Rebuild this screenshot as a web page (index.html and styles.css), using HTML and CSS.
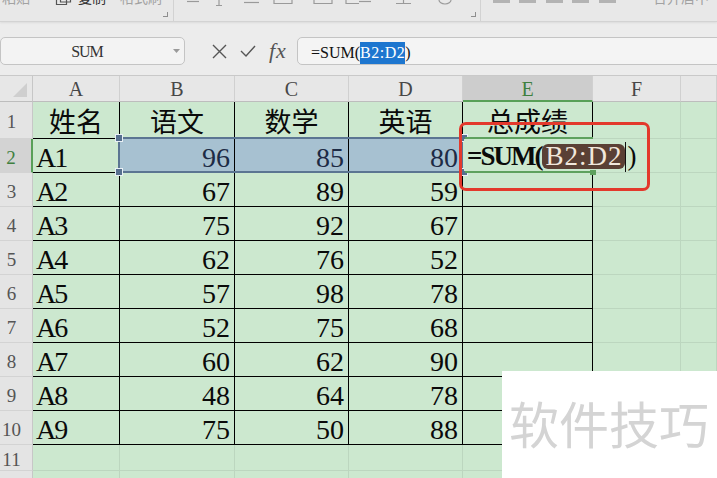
FILE: index.html
```html
<!DOCTYPE html>
<html lang="zh">
<head>
<meta charset="utf-8">
<title>WPS 表格 - SUM</title>
<link rel="stylesheet" href="styles.css">
</head>
<body>
<div class="app">
  <div class="toolbar">
    <span class="tb-t tb-light tb-paste">粘贴</span>
    <svg class="tb-copy" width="17" height="6" viewBox="0 0 17 6"><path d="M1.5 0v4.5h10v-4.5M5.5 0v2h10v-2" fill="none" stroke="#555" stroke-width="1.2"/></svg>
    <span class="tb-t tb-dark tb-copytxt">复制</span>
    <span class="tb-t tb-light tb-brush">格式刷</span>
    <span class="tb-corner tb-corner1"></span>
    <span class="tb-sep tb-sep1"></span>
    <svg class="tb-strip" width="295" height="8" viewBox="0 0 295 8">
      <g fill="none" stroke="#9a9a9a" stroke-width="1.2">
        <path d="M13 1.5h12"/>
        <path d="M45 0v5M42 5.5h6"/>
        <path d="M70 2.5h15"/>
        <path d="M100 0v3.5h18v-3.5"/>
        <path d="M140 0v3.5h18v-3.5"/>
        <path d="M172 0v3.5h13"/>
        <path d="M185 1.5h12"/>
        <path d="M222 3.5h15M229.5 0v3.5"/>
        <path d="M265 0a6 4 0 0 0 12 0"/>
      </g>
    </svg>
    <span class="tb-corner tb-corner2"></span>
    <span class="tb-sep tb-sep2"></span>
    <svg class="tb-blocks" width="125" height="4" viewBox="0 0 125 4">
      <g fill="#b3b3b3">
        <rect x="0" y="0" width="17" height="3"/>
        <rect x="26" y="0" width="17" height="3"/>
        <rect x="53" y="0" width="17" height="3"/>
        <rect x="79" y="0" width="17" height="3"/>
        <rect x="106" y="0" width="17" height="3"/>
      </g>
    </svg>
    <span class="tb-t tb-light tb-merge">合并居中</span>
  </div>

  <div class="fbar">
    <div class="namebox">
      <span class="nb-text">SUM</span>
      <svg class="nb-arrow" width="7" height="4" viewBox="0 0 7 4"><path d="M0 0h7L3.5 4z" fill="#9a9a9a"/></svg>
    </div>
    <div class="fx-icons">
      <svg class="ic-x" width="15" height="15" viewBox="0 0 15 15"><path d="M1 1L14 14M14 1L1 14" stroke="#555" stroke-width="1.4" fill="none"/></svg>
      <svg class="ic-ok" width="16" height="12" viewBox="0 0 16 12"><path d="M1 6l5 5L15 1" stroke="#555" stroke-width="1.4" fill="none"/></svg>
      <span class="ic-fx">fx</span>
    </div>
    <div class="finput">=SUM(<span class="hl">B2:D2</span>)</div>
  </div>

  <div class="sheet">
    <div class="grid">
      <div class="rh corner"><svg width="14" height="14" viewBox="0 0 14 14"><path d="M14 0V14H0z" fill="#cfcfcf"/></svg></div>
      <div class="ch">A</div><div class="ch">B</div><div class="ch">C</div><div class="ch">D</div><div class="ch on">E</div><div class="ch">F</div><div class="ch"></div>

      <div class="rh">1</div><div class="c t h">姓名</div><div class="c t h">语文</div><div class="c t h">数学</div><div class="c t h">英语</div><div class="c t h">总成绩</div><div class="c"></div><div class="c"></div>

      <div class="rh on">2</div><div class="c t l">A1</div><div class="c t r s">96</div><div class="c t r s">85</div><div class="c t r s">80</div><div class="c t"></div><div class="c"></div><div class="c"></div>

      <div class="rh">3</div><div class="c t l">A2</div><div class="c t r">67</div><div class="c t r">89</div><div class="c t r">59</div><div class="c t"></div><div class="c"></div><div class="c"></div>

      <div class="rh">4</div><div class="c t l">A3</div><div class="c t r">75</div><div class="c t r">92</div><div class="c t r">67</div><div class="c t"></div><div class="c"></div><div class="c"></div>

      <div class="rh">5</div><div class="c t l">A4</div><div class="c t r">62</div><div class="c t r">76</div><div class="c t r">52</div><div class="c t"></div><div class="c"></div><div class="c"></div>

      <div class="rh">6</div><div class="c t l">A5</div><div class="c t r">57</div><div class="c t r">98</div><div class="c t r">78</div><div class="c t"></div><div class="c"></div><div class="c"></div>

      <div class="rh">7</div><div class="c t l">A6</div><div class="c t r">52</div><div class="c t r">75</div><div class="c t r">68</div><div class="c t"></div><div class="c"></div><div class="c"></div>

      <div class="rh">8</div><div class="c t l">A7</div><div class="c t r">60</div><div class="c t r">62</div><div class="c t r">90</div><div class="c t"></div><div class="c"></div><div class="c"></div>

      <div class="rh">9</div><div class="c t l">A8</div><div class="c t r">48</div><div class="c t r">64</div><div class="c t r">78</div><div class="c t"></div><div class="c"></div><div class="c"></div>

      <div class="rh">10</div><div class="c t l">A9</div><div class="c t r">75</div><div class="c t r">50</div><div class="c t r">88</div><div class="c t"></div><div class="c"></div><div class="c"></div>

      <div class="rh">11</div><div class="c"></div><div class="c"></div><div class="c"></div><div class="c"></div><div class="c"></div><div class="c"></div><div class="c"></div>

      <div class="rh">12</div><div class="c"></div><div class="c"></div><div class="c"></div><div class="c"></div><div class="c"></div><div class="c"></div><div class="c"></div>
    </div>

    <div class="selbox"></div>
    <span class="handle hd-tl"></span>
    <span class="handle hd-bl"></span>
    <span class="handle hd-tr"></span>
    <span class="handle hd-br"></span>

    <div class="active-top"></div>
    <div class="editor"><b class="ed-fn">=SUM(</b><span class="ed-ref">B2:D2</span><span class="caret"></span><span class="ed-close">)</span></div>
    <div class="active-bottom"></div>
    <span class="fill-handle"></span>

    <div class="redbox"></div>
  </div>

  <div class="watermark">软件技巧</div>
</div>
</body>
</html>
```

FILE: styles.css
```css
html, body {
  margin: 0;
  padding: 0;
}

.app {
  width: 717px;
  height: 478px;
  overflow: hidden;
  position: relative;
  background: #ececec;
  font-family: "Liberation Serif", "Noto Sans CJK SC", serif;
}

/* ---------- toolbar (cut off at top) ---------- */
.toolbar {
  height: 21px;
  background: #e8e8e8;
  border-bottom: 1px solid #d3d3d3;
  box-shadow: 0 1px 2px rgba(0, 0, 0, 0.07);
  display: flex;
  align-items: flex-start;
  overflow: hidden;
  position: relative;
  z-index: 1;
}

.tb-t {
  font-family: "Noto Sans CJK SC", sans-serif;
  font-size: 14px;
  line-height: 14px;
  margin-top: -10px;
  white-space: nowrap;
}

.tb-light { color: #a2a2a2; }
.tb-dark { color: #333; }

.tb-paste { margin-left: 2px; }
.tb-copy { margin-left: 25px; flex: none; }
.tb-copytxt { margin-left: 6px; }
.tb-brush { margin-left: 14px; }

.tb-corner {
  box-sizing: border-box;
  width: 5px;
  height: 5px;
  margin-top: 12px;
  border-right: 1px solid #8e8e8e;
  border-bottom: 1px solid #8e8e8e;
  flex: none;
}
.tb-corner1 { margin-left: 1px; }
.tb-corner2 { margin-left: 2px; }

.tb-sep {
  width: 1px;
  height: 21px;
  background: #d2d2d2;
  flex: none;
}
.tb-sep1 { margin-left: 5px; }
.tb-sep2 { margin-left: 4px; }

.tb-strip { flex: none; }
.tb-blocks { margin-left: 12px; flex: none; }
.tb-merge { margin-left: 35px; }

/* ---------- formula bar ---------- */
.fbar {
  display: flex;
  height: 28px;
  padding: 15px 0 10px;
}

.namebox {
  box-sizing: border-box;
  width: 185px;
  height: 28px;
  border: 1px solid #c4c4c4;
  border-radius: 5px;
  background: #f3f3f3;
  display: flex;
  align-items: center;
  padding-right: 4px;
  flex: none;
}

.nb-text {
  flex: 1;
  text-align: center;
  font-size: 16px;
  letter-spacing: -1px;
  color: #333;
  padding-top: 2px;
}

.nb-arrow { flex: none; }

.fx-icons {
  width: 112px;
  box-sizing: border-box;
  padding-left: 27px;
  display: flex;
  align-items: center;
  flex: none;
}

.ic-x { flex: none; }
.ic-ok { flex: none; margin-left: 13px; }

.ic-fx {
  margin-left: 13px;
  font-family: "Liberation Serif", serif;
  font-style: italic;
  font-size: 22px;
  letter-spacing: 1px;
  color: #555;
  line-height: 22px;
}

.finput {
  flex: 1;
  margin-right: -10px;
  box-sizing: border-box;
  height: 28px;
  border: 1px solid #c4c4c4;
  border-radius: 5px;
  background: #f4f4f4;
  padding: 4px 0 0 13px;
  display: flex;
  align-items: center;
  font-size: 16px;
  color: #111;
  white-space: nowrap;
}

.hl {
  display: inline-block;
  background: #1d76cf;
  color: #fff;
  line-height: 22px;
  letter-spacing: 0.5px;
}

/* ---------- sheet grid ---------- */
.sheet {
  position: relative;
}

.grid {
  display: grid;
  grid-template-columns: 33px 87px 115px 114px 114px 130px 88px 1fr;
  grid-template-rows: 26px 37px repeat(9, 34px) 26px 30px;
  border-top: 1px solid #c9c9c9;
}

.ch {
  box-sizing: border-box;
  background: #e7e7e7;
  border-right: 1px solid #d0d0d0;
  border-bottom: 1px solid #bdbdbd;
  display: flex;
  align-items: center;
  justify-content: center;
  padding-top: 2px;
  font-size: 20px;
  color: #474747;
}

.ch.on {
  background: #cdcdcd;
  color: #3f7f3f;
  border-bottom: 2px solid #58a058;
}

.rh {
  box-sizing: border-box;
  background: #e4e4e4;
  border-right: 1px solid #c7c7c7;
  border-bottom: 1px solid #d3d3d3;
  display: flex;
  align-items: center;
  justify-content: center;
  padding: 4px 9px 0 0;
  font-size: 19px;
  color: #555;
}

.rh.on {
  background: #d3d3d3;
  color: #3f7f3f;
  border-right: 2px solid #58a058;
}

.rh.corner {
  background: #e7e7e7;
  border-bottom-color: #bdbdbd;
  align-items: flex-start;
  justify-content: flex-start;
  padding: 7px 0 0 13px;
}

.c {
  box-sizing: border-box;
  background: #cce8cf;
  border-right: 1px solid #bcd6bf;
  border-bottom: 1px solid #bcd6bf;
  display: flex;
  align-items: center;
  padding: 4px 4px 0;
  font-size: 28px;
  line-height: normal;
  color: #0a0a0a;
  white-space: nowrap;
  min-width: 0;
}

.c.t {
  border-right-color: #000;
  border-bottom-color: #000;
}

.c.l {
  justify-content: flex-start;
  padding-left: 3px;
  letter-spacing: -2px;
}

.c.r {
  justify-content: flex-end;
}

.c.h {
  justify-content: center;
  font-family: "Noto Sans CJK SC", sans-serif;
  font-size: 27px;
  line-height: 1.2;
  padding-top: 2px;
}

.c.s {
  background: #a7c1d1;
  color: #1d2b45;
}

/* ---------- overlays ---------- */
.selbox {
  position: absolute;
  left: 118px;
  top: 62px;
  width: 345px;
  height: 36px;
  box-sizing: border-box;
  border: 2px solid #5b7592;
  pointer-events: none;
}

.handle {
  position: absolute;
  width: 6px;
  height: 6px;
  background: #56708e;
  border: 1px solid #e9f0f5;
}
.hd-tl { left: 115px; top: 59px; }
.hd-bl { left: 115px; top: 93px; }
.hd-tr { left: 460px; top: 59px; }
.hd-br { left: 460px; top: 93px; }

.active-top,
.active-bottom {
  position: absolute;
  left: 465px;
  width: 128px;
  height: 2px;
  background: #5ea15e;
}
.active-top { top: 62px; }
.active-bottom { top: 96px; }

.fill-handle {
  position: absolute;
  left: 590px;
  top: 95px;
  width: 6px;
  height: 5px;
  background: #5ea15e;
}

.editor {
  position: absolute;
  left: 464px;
  top: 64px;
  width: 176px;
  height: 32px;
  box-sizing: border-box;
  background: #cce8cf;
  display: flex;
  align-items: center;
  padding: 3px 0 0 3px;
  font-size: 27px;
  color: #0a0a0a;
  white-space: nowrap;
}

.ed-fn {
  font-weight: bold;
  letter-spacing: -2px;
}

.ed-ref {
  display: inline-block;
  background: #5a4035;
  color: #f1e7dc;
  border-radius: 6px;
  padding: 0 3px;
  line-height: 25px;
  height: 25px;
  margin-left: 1px;
  letter-spacing: 1px;
}

.caret {
  display: inline-block;
  width: 1px;
  height: 30px;
  background: #111;
}

.ed-close {
  margin-left: 1px;
}

.redbox {
  position: absolute;
  left: 459px;
  top: 47px;
  width: 191px;
  height: 69px;
  box-sizing: border-box;
  border: 3px solid #e3392c;
  border-radius: 7px;
  pointer-events: none;
}

/* ---------- watermark ---------- */
.watermark {
  position: absolute;
  left: 502px;
  top: 371px;
  right: 0;
  bottom: 0;
  background: #fff;
  padding: 26px 0 0 7px;
  font-family: "Noto Sans CJK SC", sans-serif;
  font-size: 50px;
  line-height: 50px;
  color: #d4d4d4;
  white-space: nowrap;
}
```
